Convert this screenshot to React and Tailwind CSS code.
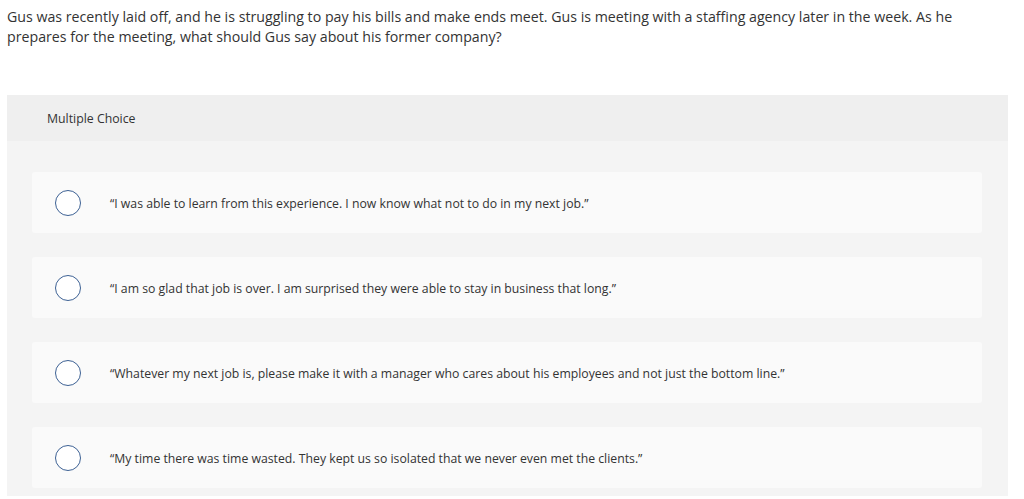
import React from 'react';

const options = [
  '\u201CI was able to learn from this experience. I now know what not to do in my next job.\u201D',
  '\u201CI am so glad that job is over. I am surprised they were able to stay in business that long.\u201D',
  '\u201CWhatever my next job is, please make it with a manager who cares about his employees and not just the bottom line.\u201D',
  '\u201CMy time there was time wasted. They kept us so isolated that we never even met the clients.\u201D',
];

const App = () => {
  return (
    <div className="w-[1024px] h-[499px] overflow-hidden bg-white text-[#333] font-['Open_Sans',sans-serif]">
      <p className="w-[985px] px-[7px] pt-[7px] text-[14.2px] leading-[20px]">
        Gus was recently laid off, and he is struggling to pay his bills and make ends meet. Gus is meeting with a staffing agency later in the week. As he prepares for the meeting, what should Gus say about his former company?
      </p>

      <div className="mt-[48px] ml-[7px] w-[1001px] bg-[#f4f4f4]">
        <div className="h-[46px] bg-[#efefef] flex items-center pl-[40px] pt-[2px] text-[12.3px]">
          Multiple Choice
        </div>
        <div className="pt-[31px] pb-[8px] pl-[25px] pr-[26px] flex flex-col gap-[24px]">
          {options.map((opt, i) => (
            <div key={i} className="h-[61px] bg-[#fafafa] rounded-[3px] flex items-center pl-[23px]">
              <span className="w-[26px] h-[26px] rounded-full border border-[#3d6194] bg-white shrink-0" />
              <span className="ml-[29px] pt-[4px] text-[12.25px]">{opt}</span>
            </div>
          ))}
        </div>
      </div>
    </div>
  );
};

export default App;
